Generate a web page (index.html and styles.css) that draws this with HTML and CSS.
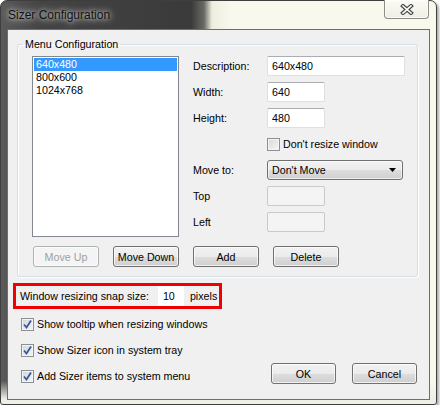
FILE: index.html
```html
<!DOCTYPE html>
<html lang="en">
<head>
	<meta charset="UTF-8">
	<title>Sizer Configuration</title>
	<link rel="stylesheet" href="styles.css">
</head>
<body>
	<div class="window">
		<div class="titlebar">
			<span class="title">Sizer Configuration</span>
			<span class="close">
				<svg width="14" height="11" viewBox="0 0 14 11">
					<path d="M3 2 L11 9 M11 2 L3 9" stroke="#4a4a4a" stroke-width="4" stroke-linecap="square"/>
					<path d="M3 2 L11 9 M11 2 L3 9" stroke="#fff" stroke-width="1.6" stroke-linecap="square"/>
				</svg>
			</span>
		</div>
		<div class="client">
			<fieldset class="group">
				<legend>Menu Configuration</legend>
				<div class="group-body">
					<ul class="listbox">
						<li class="selected">640x480</li>
						<li>800x600</li>
						<li>1024x768</li>
					</ul>
					<div class="form">
						<label>Description:</label><span class="field wide">640x480</span>
						<label>Width:</label><span class="field narrow">640</span>
						<label>Height:</label><span class="field narrow">480</span>
						<span></span><span class="check"><span class="box"></span>Don't resize window</span>
						<label>Move to:</label>
						<span class="combo">Don't Move
							<svg width="8" height="5" viewBox="0 0 8 5"><path d="M0 0 H7 L3.5 4 Z" fill="#000"/></svg>
						</span>
						<label>Top</label><span class="field narrow disabled"></span>
						<label>Left</label><span class="field narrow disabled"></span>
					</div>
				</div>
				<div class="buttons">
					<span class="btn disabled">Move Up</span>
					<span class="btn">Move Down</span>
					<span class="btn">Add</span>
					<span class="btn">Delete</span>
				</div>
			</fieldset>
			<div class="snap">
				<span class="snap-label">Window resizing snap size:</span>
				<span class="snap-input">10</span>
				<span class="snap-unit">pixels</span>
			</div>
			<div class="bottom">
				<div class="checks">
					<span class="check"><span class="box on"><svg width="11" height="11" viewBox="0 0 11 11"><path d="M2 5.5 L4.5 8.5 L9 1.5" stroke="#3b5894" stroke-width="1.8" fill="none"/></svg></span>Show tooltip when resizing windows</span>
					<span class="check"><span class="box on"><svg width="11" height="11" viewBox="0 0 11 11"><path d="M2 5.5 L4.5 8.5 L9 1.5" stroke="#3b5894" stroke-width="1.8" fill="none"/></svg></span>Show Sizer icon in system tray</span>
					<span class="check"><span class="box on"><svg width="11" height="11" viewBox="0 0 11 11"><path d="M2 5.5 L4.5 8.5 L9 1.5" stroke="#3b5894" stroke-width="1.8" fill="none"/></svg></span>Add Sizer items to system menu</span>
				</div>
				<div class="actions">
					<span class="btn">OK</span>
					<span class="btn">Cancel</span>
				</div>
			</div>
		</div>
	</div>
</body>
</html>
```

FILE: styles.css
```css
*{
	margin: 0;
	padding: 0;
	box-sizing: border-box;
}
body{
	background: #fff;
	font-family: "Liberation Sans", Arial, sans-serif;
	font-size: 10.7px;
	color: #000;
}
.window{
	width: 437px;
	height: 405px;
	border: 1px solid #3e3e3e;
	border-radius: 7px 7px 3px 3px;
	background:
		linear-gradient(to bottom, rgba(242,242,234,0) 0, rgba(242,242,234,0) 380px, #efefe6 398px),
		linear-gradient(90deg, #5a5a5a 0, #444 40px, #3a3a3a 190px, #6a6a64 203px, #eeeee0 211px, #f8f8ec 230px);
	box-shadow: 2px 2px 3px rgba(0,0,0,0.35);
	display: flex;
	flex-direction: column;
}
.titlebar{
	height: 28px;
	display: flex;
	justify-content: space-between;
	align-items: flex-start;
}
.title{
	font-size: 12px;
	line-height: 29px;
	padding-left: 7px;
	color: #111;
	text-shadow: 0 0 4px rgba(255,255,255,0.7), 0 0 8px rgba(255,255,255,0.6), 0 0 12px rgba(255,255,255,0.4);
}
.close{
	width: 45px;
	height: 19px;
	margin: -1px 7px 0 0;
	border: 1px solid #8c8c86;
	border-top: none;
	border-radius: 0 0 4px 4px;
	background: linear-gradient(#fbfbf4, #eeeee6);
	box-shadow: inset 0 0 0 1px rgba(255,255,255,0.7);
	display: flex;
	align-items: center;
	justify-content: center;
}
.client{
	flex: 1;
	margin: 0 6px 4px 6px;
	border: 1px solid #6e6e6e;
	background: #f0f0f0;
}
.group{
	margin: 8px 11px 0 9px;
	padding: 0 0 9px 0;
	border: 1px solid #d5dfe5;
	border-radius: 3px;
	box-shadow: inset 1px 1px 0 #fff, 1px 1px 0 #fff;
	min-width: 0;
}
.group legend{
	margin-left: 5px;
	padding: 0 2px;
	line-height: 13px;
}
.group-body{
	display: flex;
	gap: 14px;
	padding: 5px 0 0 14px;
}
.listbox{
	list-style: none;
	width: 147px;
	height: 181px;
	border: 1px solid #828790;
	background: #fff;
	padding: 1px;
}
.listbox li{
	height: 13px;
	line-height: 13px;
	padding-left: 2px;
}
.listbox li.selected{
	background: #3399ff;
	color: #fff;
}
.form{
	display: grid;
	grid-template-columns: 74px auto;
	grid-auto-rows: 20px;
	row-gap: 6px;
	align-items: center;
	justify-items: start;
}
.field{
	height: 20px;
	border: 1px solid #dbdfe6;
	border-top-color: #abadb3;
	border-radius: 2px;
	background: #fff;
	padding-left: 4px;
	line-height: 18px;
}
.field.wide{
	width: 138px;
}
.field.narrow{
	width: 58px;
}
.field.disabled{
	background: #f4f4f4;
	border-color: #c9c9c9;
}
.check{
	display: flex;
	align-items: center;
	gap: 3px;
	height: 20px;
}
.box{
	width: 13px;
	height: 13px;
	border: 1px solid #8e8f8f;
	background: linear-gradient(135deg, #d9d9d9, #f6f6f6);
	box-shadow: inset 0 0 0 1px #f4f4f4;
	display: flex;
	align-items: center;
	justify-content: center;
}
.box.on{
	background: linear-gradient(135deg, #cfd5dc, #f4f6f8);
}
.combo{
	width: 136px;
	height: 20px;
	border: 1px solid #707070;
	border-radius: 3px;
	background: linear-gradient(#f2f2f2 0, #ebebeb 50%, #dddddd 51%, #cfcfcf 100%);
	box-shadow: inset 0 0 0 1px rgba(255,255,255,0.6);
	display: flex;
	align-items: center;
	justify-content: space-between;
	padding: 0 5px 0 4px;
}
.buttons{
	display: flex;
	gap: 14px;
	margin: 9px 0 0 15px;
}
.btn{
	width: 66px;
	height: 21px;
	border: 1px solid #707070;
	border-radius: 3px;
	background: linear-gradient(#f2f2f2 0, #ebebeb 50%, #dddddd 51%, #cfcfcf 100%);
	box-shadow: inset 0 0 0 1px rgba(255,255,255,0.7);
	display: flex;
	align-items: center;
	justify-content: center;
}
.btn.disabled{
	color: #a0a0a0;
	border-color: #adb2b5;
	background: #f4f4f4;
}
.snap{
	display: flex;
	align-items: center;
	width: 209px;
	height: 26px;
	margin: 6px 0 0 5px;
	border: 3px solid #f00000;
	padding-left: 4px;
	white-space: nowrap;
}
.snap-label{
	flex-shrink: 0;
}
.snap-input{
	flex-shrink: 0;
	width: 26px;
	height: 20px;
	margin-left: 9px;
	background: #fff;
	padding-left: 5px;
	line-height: 20px;
}
.snap-unit{
	margin-left: 6px;
}
.bottom{
	display: flex;
	justify-content: space-between;
	align-items: flex-end;
	margin: 5px 12px 0 13px;
}
.checks{
	display: flex;
	flex-direction: column;
	gap: 6px;
}
.actions{
	display: flex;
	gap: 16px;
	margin-bottom: 2px;
}
.actions .btn{
	width: 65px;
}
```
